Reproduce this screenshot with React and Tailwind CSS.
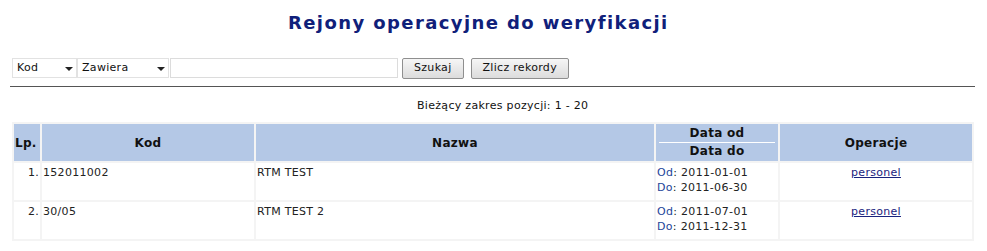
import React from "react";

const ROWS = [
    { lp: 1, kod: "152011002", nazwa: "RTM TEST", od: "2011-01-01", do: "2011-06-30" },
    { lp: 2, kod: "30/05", nazwa: "RTM TEST 2", od: "2011-07-01", do: "2011-12-31" },
];

function FakeSelect({ label, width }) {
    return (
        <div className={`flex items-center justify-between h-[20px] border border-[#e2e2e2] bg-white pl-[4px] pr-[3px] ${width}`}>
            <span>{label}</span>
            <svg width="8" height="5" viewBox="0 0 8 5" className="mt-[2px]">
                <path d="M0 0 L8 0 L4 4 Z" fill="#222" />
            </svg>
        </div>
    );
}

function App() {
    return (
        <div className="w-[987px] h-[251px] bg-white text-[11px] text-[#111] tracking-[0.3px] overflow-hidden" style={{ fontFamily: "'DejaVu Sans', Verdana, sans-serif" }}>
            <h1 className="pt-[11px] pl-[288px] text-[18px] font-bold text-[#10207a] leading-[24px] tracking-[1.4px]">
                Rejony operacyjne do weryfikacji
            </h1>

            {/* Search bar */}
            <div className="flex items-center mt-[22px] pl-[12px] h-[22px]">
                <FakeSelect label="Kod" width="w-[65px]" />
                <FakeSelect label="Zawiera" width="w-[92px]" />
                <div className="w-[228px] h-[20px] ml-[1px] border border-[#dcdcdc] bg-white" />
                <button className="ml-[4px] h-[21px] px-[11px] rounded-[2px] border border-[#8f8f8f] bg-gradient-to-b from-[#f6f6f6] to-[#dcdcdc] text-[11px] tracking-[0.3px]">
                    Szukaj
                </button>
                <button className="ml-[7px] h-[21px] px-[11px] rounded-[2px] border border-[#8f8f8f] bg-gradient-to-b from-[#f6f6f6] to-[#dcdcdc] text-[11px] tracking-[0.3px]">
                    Zlicz rekordy
                </button>
            </div>

            <div className="mx-[10px] w-[965px] mt-[7px] border-t border-[#555]" />

            <p className="mt-[12px] pl-[417px] leading-[14px]">Bieżący zakres pozycji: 1 - 20</p>

            <table className="ml-[12px] mt-[9px] w-[962px] border-separate border-spacing-[2px] bg-[#f4f4f4]">
                <thead>
                    <tr className="bg-[#b4c8e6] font-bold text-[12px]">
                        <th className="w-[26px] h-[37px] px-[1px] text-left">Lp.</th>
                        <th className="w-[212px]">Kod</th>
                        <th className="w-[398px]">Nazwa</th>
                        <th className="w-[122px] p-0">
                            <div className="mx-[3px] pb-[1px] leading-[15px] border-b border-white">Data od</div>
                            <div className="pt-[1px] leading-[15px]">Data do</div>
                        </th>
                        <th>Operacje</th>
                    </tr>
                </thead>
                <tbody>
                    {ROWS.map((r) => (
                        <tr key={r.lp} className="bg-white align-top leading-[15px] text-[#222]">
                            <td className="h-[37px] pt-[2px] pr-[1px] text-right">{r.lp}.</td>
                            <td className="pt-[2px] pl-[1px]">{r.kod}</td>
                            <td className="pt-[2px] pl-[1px]">{r.nazwa}</td>
                            <td className="pt-[2px] pl-[1px]">
                                <div><span className="text-[#23459a]">Od</span>: {r.od}</div>
                                <div><span className="text-[#23459a]">Do</span>: {r.do}</div>
                            </td>
                            <td className="pt-[2px] text-center">
                                <a href="#" className="text-[#1a237e] underline">personel</a>
                            </td>
                        </tr>
                    ))}
                </tbody>
            </table>
        </div>
    );
}

export default App;
